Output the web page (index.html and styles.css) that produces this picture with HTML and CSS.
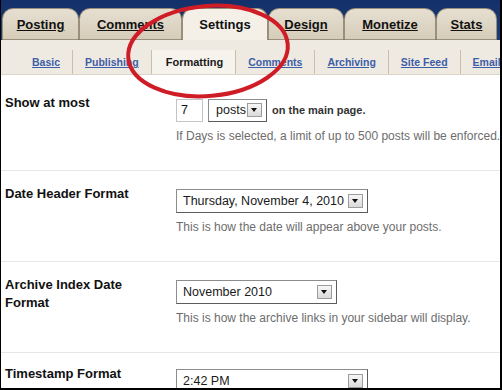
FILE: index.html
```html
<!DOCTYPE html>
<html>
<head>
  <title>Settings - Formatting</title>
  <link rel="stylesheet" href="styles.css">
</head>
<body>
  <div class="frame">
    <div class="tabs">
      <a class="tab tab-posting">Posting</a>
      <a class="tab tab-comments">Comments</a>
      <a class="tab tab-settings active">Settings</a>
      <a class="tab tab-design">Design</a>
      <a class="tab tab-monetize">Monetize</a>
      <a class="tab tab-stats">Stats</a>
    </div>

    <div class="subnav">
      <a class="subtab">Basic</a>
      <a class="subtab">Publishing</a>
      <a class="subtab active">Formatting</a>
      <a class="subtab">Comments</a>
      <a class="subtab">Archiving</a>
      <a class="subtab">Site Feed</a>
      <a class="subtab last">Email</a>
    </div>

    <div class="content">
      <div class="row first">
        <div class="label">Show at most</div>
        <div class="field">
          <div class="controls">
            <div class="textbox">7</div>
            <div class="select select-posts"><span class="value">posts</span><span class="arrow"></span></div>
            <span class="inline-text">on the main page.</span>
          </div>
          <div class="help">If Days is selected, a limit of up to 500 posts will be enforced.</div>
        </div>
      </div>

      <div class="row">
        <div class="label">Date Header Format</div>
        <div class="field">
          <div class="controls">
            <div class="select select-wide"><span class="value">Thursday, November 4, 2010</span><span class="arrow"></span></div>
          </div>
          <div class="help">This is how the date will appear above your posts.</div>
        </div>
      </div>

      <div class="row">
        <div class="label">Archive Index Date<br>Format</div>
        <div class="field">
          <div class="controls">
            <div class="select select-mid"><span class="value">November 2010</span><span class="arrow"></span></div>
          </div>
          <div class="help">This is how the archive links in your sidebar will display.</div>
        </div>
      </div>

      <div class="row last">
        <div class="label">Timestamp Format</div>
        <div class="field">
          <div class="controls">
            <div class="select select-wide"><span class="value">2:42 PM</span><span class="arrow"></span></div>
          </div>
        </div>
      </div>
    </div>

    <svg class="annotation" width="499" height="388" viewBox="0 0 499 388">
      <ellipse cx="207" cy="51" rx="80" ry="45" transform="rotate(-5 207 51)" fill="none" stroke="#cf1d27" stroke-width="4"/>
    </svg>
  </div>
</body>
</html>
```

FILE: styles.css
```css
body {
  margin: 0;
  font-family: "Liberation Sans", Arial, sans-serif;
  background-color: #fff;
}

.frame {
  position: relative;
  width: 502px;
  height: 390px;
  box-sizing: border-box;
  border-left: 1px solid #000;
  border-right: 2px solid #000;
  border-bottom: 2px solid #000;
  overflow: hidden;
  background-color: #fff;
}

/* main tabs */
.tabs {
  display: flex;
  align-items: flex-end;
  padding: 8px 0 0 1px;
  background: linear-gradient(#14306a, #1d3c73);
}

.tab {
  box-sizing: border-box;
  height: 32px;
  line-height: 32px;
  text-align: center;
  font-size: 13px;
  font-weight: bold;
  color: #111;
  text-decoration: underline;
  background: linear-gradient(#e6dfd1, #d6ccb9);
  border: 1px solid #9a8f7b;
  border-radius: 11px 11px 0 0;
}

.tab.active {
  background: #f4f0e8;
  text-decoration: none;
  border-bottom: none;
}

.tab-posting { width: 77px; }
.tab-comments { width: 103px; }
.tab-settings { width: 86px; }
.tab-design { width: 76px; }
.tab-monetize { width: 92px; }
.tab-stats { width: 61px; }

/* sub tabs */
.subnav {
  display: flex;
  align-items: flex-end;
  padding: 10px 0 0 19px;
  background-color: #efeae1;
  border-bottom: 1px solid #ddd5c7;
  white-space: nowrap;
}

.subtab {
  height: 24px;
  line-height: 24px;
  padding: 0 12px;
  font-size: 10.5px;
  font-weight: bold;
  color: #3d5ea8;
  text-decoration: underline;
  border-right: 1px solid #cbbfa9;
}

.subtab.active {
  padding: 0 12px 0 14px;
  font-size: 11px;
  color: #1a1a1a;
  text-decoration: none;
  background-color: #f6f3ed;
  border-left: 1px solid #cbbfa9;
  margin-left: -1px;
}

.subtab.last {
  border-right: none;
}

/* form rows */
.row {
  display: flex;
  padding: 14px 0 27px 4px;
  border-bottom: 1px solid #e7e7e7;
}

.row.first {
  padding-top: 19px;
}

.row.last {
  padding-top: 12px;
  border-bottom: none;
}

.label {
  width: 171px;
  flex-shrink: 0;
  font-size: 13px;
  line-height: 18px;
  font-weight: bold;
  color: #111;
}

.field {
  flex: 1;
}

.controls {
  display: flex;
  align-items: center;
  gap: 5px;
  margin-top: 4px;
  height: 24px;
}

.textbox {
  box-sizing: border-box;
  width: 27px;
  height: 23px;
  line-height: 21px;
  padding-left: 4px;
  font-size: 12.5px;
  color: #111;
  border: 1px solid #c4c4c4;
}

.select {
  box-sizing: border-box;
  display: flex;
  flex-shrink: 0;
  align-items: center;
  justify-content: space-between;
  height: 24px;
  padding: 0 4px 0 6px;
  font-size: 12.5px;
  color: #1a1a1a;
  white-space: nowrap;
  background-color: #fff;
  border: 1px solid #8c8c8c;
  border-right-color: #5c5c5c;
  border-bottom-color: #5c5c5c;
}

.select-posts {
  width: 59px;
  height: 23px;
  padding-left: 7px;
}

.select-wide {
  width: 192px;
}

.select-mid {
  width: 161px;
}

.arrow {
  position: relative;
  flex-shrink: 0;
  box-sizing: border-box;
  width: 15px;
  height: 14px;
  border: 1px solid #9c9c9c;
  background: linear-gradient(#f7f7f7, #dadada);
}

.arrow::after {
  content: "";
  position: absolute;
  left: 3px;
  top: 4px;
  border-left: 3.5px solid transparent;
  border-right: 3.5px solid transparent;
  border-top: 4px solid #111;
}

.inline-text {
  font-size: 11px;
  font-weight: bold;
  color: #333;
}

.help {
  margin-top: 7px;
  font-size: 12px;
  line-height: 14px;
  color: #6d6d6d;
  white-space: nowrap;
}

/* red hand-drawn circle on top of the screenshot */
.annotation {
  position: absolute;
  left: 0;
  top: 0;
  pointer-events: none;
}
```
